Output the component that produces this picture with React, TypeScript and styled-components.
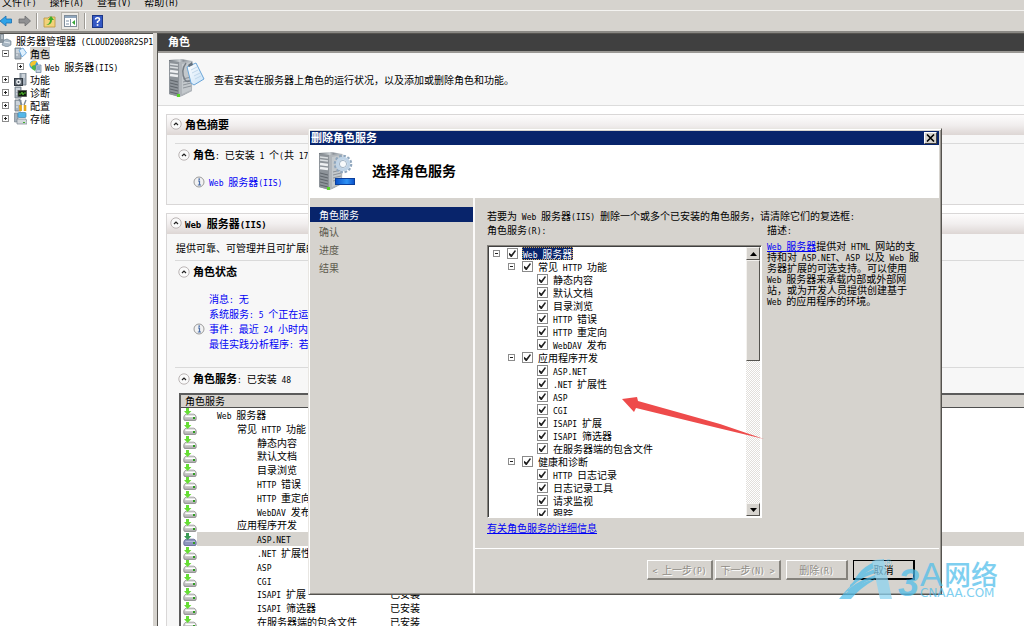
import React from 'react';
import styled, { createGlobalStyle, css } from 'styled-components';

const Global = createGlobalStyle`
  *, *::before, *::after { box-sizing: border-box; }
  html, body, #root { height: 100%; }
  body {
    margin: 0;
    overflow: hidden;
    background: #d6d3ce;
    color: #000;
    font: 10px/13px 'Noto Sans CJK SC', sans-serif;
  }
`;

const MixedText = styled.span`
  white-space: pre;
`;

const Latin = styled.span<{ $size: number }>`
  font-family: 'DejaVu Sans Mono', monospace;
  font-size: ${(p) => p.$size}px;
  line-height: 0;
`;

function T({ children, latin = 8 }: { children: string; latin?: number }) {
  const parts = children.split(/([\x20-\x7e]+)/).filter(Boolean);
  return (
    <MixedText>
      {parts.map((part, i) =>
        /^[\x20-\x7e]/.test(part) ? (
          <Latin key={i} $size={latin}>{part}</Latin>
        ) : (
          part
        ),
      )}
    </MixedText>
  );
}

/* ---------- drawings ---------- */

const Icon = styled.svg`
  display: block;
  flex: none;
`;

function Gradients() {
  return (
    <Icon width="0" height="0" aria-hidden="true">
      <defs>
        <linearGradient id="steel" x1="0" x2="1">
          <stop offset="0" stopColor="#6d747b" />
          <stop offset="0.45" stopColor="#c9ced2" />
          <stop offset="0.6" stopColor="#8b9198" />
          <stop offset="1" stopColor="#d4d8dc" />
        </linearGradient>
        <linearGradient id="blueBar" x1="0" x2="1">
          <stop offset="0" stopColor="#0a4fc8" />
          <stop offset="0.6" stopColor="#2f93f5" />
          <stop offset="1" stopColor="#0a4fc8" />
        </linearGradient>
        <linearGradient id="sheet" x1="0" y1="0" x2="1" y2="1">
          <stop offset="0" stopColor="#ffffff" />
          <stop offset="1" stopColor="#c9e2f7" />
        </linearGradient>
        <linearGradient id="disk" x1="0" y1="0" x2="0" y2="1">
          <stop offset="0" stopColor="#f2f2f2" />
          <stop offset="1" stopColor="#a8a8a8" />
        </linearGradient>
      </defs>
    </Icon>
  );
}

function Tower() {
  return (
    <g>
      <path d="M1 1 L13 0 L25 2 L24 32 L12 38 L1 35 Z" fill="url(#steel)" />
      <path d="M1 2 L11 3 L11 38 L1 35 Z" fill="#8d9399" />
      <path d="M11 3 L24 2 L24 32 L11 38 Z" fill="#b0b5ba" />
      <path d="M14 5 L23 3 L23 31 L14 35 Z" fill="#c3c8cc" />
      <path d="M2 5 L10 6 M2 8 L10 9" stroke="#d9dde0" strokeWidth="1.4" />
      <path d="M2 12 L10 13 M2 16 L10 17" stroke="#eef0f2" strokeWidth="2.6" />
      <path d="M2 21 L10 23 M2 24 L10 26 M2 27 L10 29 M2 30 L10 32 M2 33 L10 35" stroke="#5f656b" strokeWidth="1" />
      <path d="M15 20 L23 18 M15 23 L23 21 M15 26 L23 24 M15 29 L23 27" stroke="#8d9399" strokeWidth="1" />
      <rect x="9" y="35" width="3" height="3" fill="#57d328" />
    </g>
  );
}

function RoleIcon() {
  return (
    <Icon width="38" height="40" viewBox="0 0 38 40">
      <Tower />
      <path d="M18 4 Q12 12 17 21 Q19 24 24 21" fill="none" stroke="#777e86" strokeWidth="1.4" />
      <path d="M19 8 L28 4 L36 20 L26 26 L23 24 Z" fill="url(#sheet)" stroke="#6aa5d8" strokeWidth="1" />
      <path d="M23 11 L29 8 M24 14 L30 11 M26 17 L32 14 M27 20 L33 17" stroke="#b7cfe4" strokeWidth="0.8" />
      <path d="M20 6 L24 3 L25 6 L21 8 Z" fill="#64717e" />
    </Icon>
  );
}

function RemoveRoleIcon() {
  return (
    <Icon width="38" height="40" viewBox="0 0 38 40">
      <Tower />
      <circle cx="25" cy="12" r="8.2" fill="none" stroke="#8fa6bd" strokeWidth="2.2" strokeDasharray="2.6 1.7" />
      <circle cx="25" cy="12" r="5.8" fill="#eef4fa" fillOpacity="0.6" stroke="#bfd3e6" strokeWidth="3" />
      <circle cx="25" cy="12" r="3.6" fill="#f7f9fb" stroke="#8199b0" strokeWidth="0.7" />
      <rect x="17.5" y="26.5" width="19" height="6" fill="url(#blueBar)" stroke="#0b3f9c" />
    </Icon>
  );
}

type Mark = 'root' | 'roles' | 'iis' | 'features' | 'diag' | 'config' | 'storage';

function TreeIcon({ mark }: { mark: Mark }) {
  return (
    <Icon width="13" height="13" viewBox="0 0 13 13">
      {mark === 'root' && (
        <>
          <path d="M0 0 H4 V9 H0 Z" fill="#8b969f" />
          <path d="M1 2 H3 M1 4 H3" stroke="#e5eaee" />
          <path d="M4 6 L7 5 L11 7 V11 L7 13 L2 11 Z" fill="#a8b7c4" stroke="#6c7d8c" strokeWidth="0.6" />
          <path d="M4 8 L10 9" stroke="#e8eef3" />
        </>
      )}
      {mark !== 'root' && mark !== 'iis' && mark !== 'storage' && (
        <>
          <path d={mark === 'features' ? 'M6 0 H12 V12 H6 Z' : 'M1 1 H7 V12 H1 Z'} fill="#a9b4bf" stroke="#6d7984" strokeWidth="0.8" />
          <path d={mark === 'features' ? 'M8 2 H11 M8 4 H11' : 'M2 3 H6 M2 5 H6 M2 8 H4'} stroke="#eef2f5" />
        </>
      )}
      {mark === 'roles' && (
        <path d="M5 3 L9 1 L12.5 6 L8 10 Z" fill="#dff0fd" stroke="#5ba0dc" strokeWidth="0.8" />
      )}
      {mark === 'iis' && (
        <>
          <circle cx="4.8" cy="4.8" r="4.4" fill="#3b9be0" />
          <path d="M1 4 Q3 0 8 1 L6 5 L2 7 Z" fill="#f5c52f" />
          <path d="M3 6 Q6 4 8 7 L6 11 L3 9 Z" fill="#4db648" />
          <path d="M7 5 H12 V12.5 H7 Z" fill="#c5d3df" stroke="#68809a" strokeWidth="0.7" />
          <path d="M8 7 H11 M8 9 H11" stroke="#3c72b0" strokeWidth="0.8" />
        </>
      )}
      {mark === 'features' && (
        <>
          <rect x="0.5" y="5.5" width="8" height="7" fill="#626b74" stroke="#333b44" />
          <circle cx="4.5" cy="9" r="2.4" fill="#eef2f5" />
          <circle cx="4.5" cy="9" r="1" fill="#3f4a55" />
        </>
      )}
      {mark === 'diag' && (
        <>
          <rect x="4" y="4.5" width="8.5" height="6" fill="#10200f" stroke="#555" strokeWidth="0.8" />
          <path d="M5 8 L7 8 L8 6 L9 9 L10 7 L12 7" fill="none" stroke="#5ad12f" strokeWidth="0.8" />
        </>
      )}
      {mark === 'config' && (
        <>
          <path d="M6.5 12 V6 M11 12 V6" stroke="#e5a81b" strokeWidth="2.6" />
          <path d="M5 0 L8 6 M12 1 L10 6" stroke="#7c8893" strokeWidth="1.4" />
        </>
      )}
      {mark === 'storage' && (
        <>
          <path d="M0.5 1 H4 V10 H0.5 Z" fill="#a6b1bb" stroke="#6d7984" strokeWidth="0.6" />
          <rect x="4" y="0.5" width="8" height="5" rx="1" fill="#55b7e8" stroke="#3d85ad" strokeWidth="0.7" />
          <path d="M3 7 H12 L13 10 V12 H3 Z" fill="#d3d8dc" stroke="#7a858f" strokeWidth="0.7" />
          <rect x="9" y="10" width="2" height="1" fill="#3fb12b" />
        </>
      )}
    </Icon>
  );
}

function InstalledIcon({ selected }: { selected?: boolean }) {
  return (
    <Icon width="14" height="13" viewBox="0 0 14 13">
      <path
        d="M3 6.2 H11 Q13 7 13.2 9 V11 Q13.2 12.5 12 12.5 H2 Q0.8 12.5 0.8 11 V9 Q1 7 3 6.2 Z"
        fill={selected ? '#8d95bd' : 'url(#disk)'}
        stroke={selected ? '#5d658f' : '#8a8a8a'}
        strokeWidth="0.8"
      />
      <path d="M2.5 8.5 H12" stroke={selected ? '#b5bbda' : '#fff'} strokeWidth="1" />
      <rect x="10" y="9" width="2" height="2" fill="#2f9a22" />
      <path d="M3 0 H6 V3 H8.4 L4.6 7 L1 3 H3 Z" fill={selected ? '#3a9a55' : '#66dd35'} />
    </Icon>
  );
}

function Collapse() {
  return (
    <Icon width="12" height="12" viewBox="0 0 12 12">
      <circle cx="6" cy="6" r="5.2" fill="#fafafa" stroke="#b3adad" strokeWidth="0.9" />
      <path d="M4 7 L6 5 L8 7" fill="none" stroke="#222" strokeWidth="1.2" />
    </Icon>
  );
}

function Info() {
  return (
    <Icon width="12" height="12" viewBox="0 0 12 12">
      <circle cx="6" cy="6" r="5" fill="#f2f2f2" stroke="#9a9a9a" />
      <path d="M5 5 H6.5 V9 M4.8 9 H8" fill="none" stroke="#4a6ea8" strokeWidth="1.2" />
      <circle cx="6.2" cy="3.1" r="0.9" fill="#4a6ea8" />
    </Icon>
  );
}

/* ---------- window frame ---------- */

const Page = styled.div`
  display: flex;
  flex-direction: column;
  height: 100vh;
  overflow: hidden;
`;

const MenuBar = styled.nav`
  display: flex;
  align-items: center;
  gap: 13px;
  height: 10px;
  padding: 0 2px 7px;
`;

const MenuButton = styled.button`
  border: 0;
  padding: 0;
  background: none;
  font: inherit;
  color: inherit;
`;

const ToolBar = styled.div`
  display: flex;
  align-items: center;
  height: 23px;
  gap: 5px;
  border-top: 1px solid #f4f3f1;
  border-bottom: 2px solid #8b8985;
`;

const ToolButton = styled.button<{ $active?: boolean }>`
  display: grid;
  place-items: center;
  width: ${(p) => (p.$active ? 18 : 13)}px;
  height: 18px;
  padding: 0;
  border: ${(p) => (p.$active ? '1px solid #b5b2ab' : '0')};
  background: ${(p) => (p.$active ? '#ebe9e5' : 'none')};
`;

const ToolDivider = styled.span`
  width: 2px;
  height: 16px;
  border-left: 1px solid #9d9a94;
  border-right: 1px solid #fff;
`;

const Workspace = styled.div`
  display: flex;
  flex: 1;
  min-height: 0;
`;

const Sidebar = styled.aside`
  flex: none;
  width: 153px;
  overflow: hidden;
  background: #fff;
  border-top: 1px solid #55534f;
`;

const TreeRow = styled.div<{ $indent: number }>`
  display: flex;
  align-items: center;
  height: 13px;
  gap: 3px;
  padding-left: ${(p) => p.$indent}px;
`;

const TreeLabel = styled.span<{ $selected?: boolean }>`
  background: ${(p) => (p.$selected ? '#d6d3ce' : 'none')};
`;

const ExpandBox = styled.button`
  position: relative;
  flex: none;
  width: 7px;
  height: 7px;
  margin-right: 2px;
  padding: 0;
  border: 1px solid #8c8c8c;
  background: #fff;
  &::before {
    content: '';
    position: absolute;
    inset: 2px 1px;
    background: #222;
  }
`;

const PlusBox = styled(ExpandBox)`
  &::after {
    content: '';
    position: absolute;
    inset: 1px 2px;
    background: #222;
  }
`;

/* ---------- roles pane ---------- */

const Pane = styled.main`
  flex: 1;
  min-width: 0;
  display: flex;
  flex-direction: column;
  margin-left: 4px;
  background: #fff;
  border: solid #55534f;
  border-width: 1px 0 0 1px;
`;

const PaneTitle = styled.h1`
  flex: none;
  margin: 0;
  height: 19px;
  padding-left: 10px;
  background: #404040;
  border-bottom: 2px solid #9a9894;
  color: #fff;
  font-size: 11px;
  line-height: 15px;
`;

const Intro = styled.header`
  flex: none;
  display: flex;
  align-items: center;
  gap: 8px;
  height: 53px;
  padding-left: 10px;
  background: #f7f7f7;
  border-bottom: 1px solid #dcdcdc;
`;

const Cards = styled.div`
  display: flex;
  flex-direction: column;
  gap: 8px;
  padding: 8px 0 0 8px;
`;

const Card = styled.section`
  background: #f7f7f7;
  border: solid #d9d7d7;
  border-width: 1px 0 1px 1px;
`;

const CardHead = styled.h2`
  display: flex;
  align-items: center;
  gap: 3px;
  height: 20px;
  margin: 0;
  padding: 0 0 2px 3px;
  background: linear-gradient(#fdfcfc, #f1eeee 50%, #ddd6d4);
  font-size: 11px;
`;

const CardText = styled.p`
  margin: 0;
  padding: 7px 0 6px 9px;
`;

const Group = styled.section<{ $top?: number; $bottom: number }>`
  margin: ${(p) => p.$top ?? 0}px 0 0 8px;
  padding: 4px 0 ${(p) => p.$bottom}px 3px;
  border-top: 1px solid #dadada;
`;

const GroupHead = styled.h3`
  display: flex;
  align-items: center;
  gap: 3px;
  height: 13px;
  margin: 0;
  font-size: 10px;
  font-weight: 400;
  b { font-size: 11px; }
`;

const LinkList = styled.ul`
  margin: 13px 0 0;
  padding: 0 0 0 15px;
  list-style: none;
`;

const LinkItem = styled.li`
  display: grid;
  grid-template-columns: 12px 1fr;
  align-items: center;
  column-gap: 4px;
  height: 15px;
`;

const BlueLink = styled.a`
  grid-column: 2;
  color: #0000f5;
  text-decoration: none;
`;

const ServiceTable = styled.table`
  width: 100%;
  height: 236px;
  margin: 8px 0 0 1px;
  table-layout: fixed;
  border-collapse: separate;
  border-spacing: 0;
  border: solid #5b5b5b;
  border-width: 2px 0 0 2px;
  background: #fff;
  line-height: 12px;
  th {
    height: 13px;
    padding: 0 0 0 4px;
    background: #d6d3ce;
    border-bottom: 1px solid #4e4e4e;
    font-weight: 400;
    text-align: left;
  }
  td { padding: 0; }
`;

const ServiceRow = styled.tr<{ $selected?: boolean }>`
  td:not(:first-child) {
    background: ${(p) => (p.$selected ? '#d6d3ce' : 'transparent')};
  }
`;

const NameCell = styled.td<{ $level: number }>`
  && { padding-left: ${(p) => 20 + p.$level * 20}px; }
`;

const IconCell = styled.td`
  && { padding-left: 2px; }
`;

/* ---------- wizard dialog ---------- */

const Dialog = styled.section`
  position: absolute;
  left: 308px;
  top: 128px;
  display: flex;
  flex-direction: column;
  width: 634px;
  height: 467px;
  background: #d6d3ce;
  border: 1px solid;
  border-color: #e8e6e2 #55534f #55534f #e8e6e2;
  box-shadow: inset 1px 1px #fff, inset -1px -1px #9a9791;
  padding: 2px 2px 1px 1px;
`;

const TitleBar = styled.header`
  display: flex;
  align-items: center;
  justify-content: space-between;
  height: 14px;
  padding: 0 2px 0 1px;
  background: #08246b;
  color: #fff;
  h2 { margin: 0; padding-bottom: 2px; font-size: 11px; line-height: 12px; }
`;

const CloseButton = styled.button`
  display: grid;
  place-items: center;
  width: 13px;
  height: 12px;
  padding: 0;
  background: #d6d3ce;
  border: 1px solid;
  border-color: #fff #404040 #404040 #fff;
`;

const Banner = styled.div`
  display: flex;
  align-items: center;
  gap: 16px;
  height: 53px;
  padding-left: 8px;
  background: #fff;
  h3 { margin: 0; padding-bottom: 3px; font-size: 14px; line-height: 18px; }
`;

const DialogBody = styled.div`
  display: flex;
  flex: 1;
  min-height: 0;
`;

const Steps = styled.ol`
  width: 163px;
  margin: 0;
  padding: 9px 0 0;
  list-style: none;
`;

const Step = styled.li<{ $current?: boolean }>`
  height: ${(p) => (p.$current ? 15 : 18)}px;
  margin-bottom: ${(p) => (p.$current ? 1 : 0)}px;
  padding-left: 9px;
  line-height: ${(p) => (p.$current ? 15 : 18)}px;
  color: ${(p) => (p.$current ? '#fff' : '#5c5a4d')};
  background: ${(p) => (p.$current ? '#08246b' : 'none')};
`;

const Main = styled.div`
  flex: 1;
  display: flex;
  flex-direction: column;
  border-left: 2px solid #fbfaf9;
`;

const Fields = styled.div`
  flex: 1;
  padding: 11px 8px 0 12px;
  p { margin: 0; line-height: 14px; }
`;

const Columns = styled.div`
  display: grid;
  grid-template-columns: 275px 1fr;
  column-gap: 5px;
`;

const FieldTitle = styled.div`
  height: 14px;
  line-height: 14px;
`;

const TreeFrame = styled.div`
  display: flex;
  height: 273px;
  margin-top: 8px;
  background: #fff;
  border: 1px solid;
  border-color: #85827c #fff #fff #85827c;
  box-shadow: inset 1px 1px #404040;
  padding: 1px 1px 1px 2px;
`;

const CheckTree = styled.ul`
  flex: 1;
  margin: 0;
  padding: 0;
  overflow: hidden;
  list-style: none;
`;

const CheckRow = styled.li<{ $level: number }>`
  display: flex;
  align-items: center;
  gap: 5px;
  height: 13px;
  padding-left: ${(p) => 3 + p.$level * 15}px;
  label { display: flex; align-items: center; gap: 5px; }
`;

const Leaf = styled.span`
  width: 9px;
`;

const Check = styled.input`
  appearance: none;
  position: relative;
  flex: none;
  width: 11px;
  height: 11px;
  margin: 0;
  background: #fff;
  border: 1px solid #8a8a8a;
  &:checked::before {
    content: '';
    position: absolute;
    inset: 1px;
    background: #222;
    clip-path: polygon(0 40%, 35% 65%, 85% 0, 100% 15%, 40% 100%, 25% 100%, 0 70%);
  }
`;

const CheckLabel = styled.span<{ $selected?: boolean }>`
  ${(p) =>
    p.$selected &&
    css`
      margin-left: -1px;
      padding: 0 1px;
      background: #08246b;
      color: #fff;
      outline: 1px dotted #c9a35a;
      outline-offset: -1px;
    `}
`;

const ScrollBar = styled.div`
  display: flex;
  flex-direction: column;
  width: 14px;
  background: repeating-conic-gradient(#fff 0 25%, #e2dfdb 0 50%) 0 0 / 2px 2px;
`;

const raised = css`
  background: #d6d3ce;
  border: 1px solid;
  border-color: #f4f2ef #55534f #55534f #f4f2ef;
`;

const ScrollButton = styled.button`
  ${raised}
  display: grid;
  place-items: center;
  height: 13px;
  padding: 0;
`;

const Thumb = styled.div`
  ${raised}
  height: 101px;
  margin-bottom: auto;
`;

const Description = styled.div`
  margin-top: 3px;
  line-height: 11px;
  white-space: nowrap;
`;

const HelpLink = styled.a`
  display: inline-block;
  margin-top: 3px;
  color: #0000f5;
`;

const InlineLink = styled.a`
  color: #0000f5;
`;

const Footer = styled.footer`
  display: flex;
  justify-content: flex-end;
  height: 45px;
  padding: 11px 24px 0 0;
  border-top: 1px solid #fff;
`;

const PushButton = styled.button<{ $width: number; $gap?: number; $default?: boolean }>`
  ${raised}
  width: ${(p) => p.$width}px;
  height: 20px;
  margin-left: ${(p) => p.$gap ?? 5}px;
  padding: 0;
  font: inherit;
  color: #000;
  border-width: 1px 2px 2px 1px;
  border-color: ${(p) => (p.$default ? '#000' : '#fff #85827c #85827c #fff')};
  &:disabled { color: #8f8c86; text-shadow: 1px 1px #fff; }
`;

const ArrowMark = styled.svg`
  position: absolute;
  left: 620px;
  top: 394px;
  pointer-events: none;
`;

const Watermark = styled.svg`
  position: absolute;
  left: 836px;
  top: 554px;
  opacity: 0.72;
  pointer-events: none;
`;

/* ---------- data ---------- */

const sideItems: { label: string; mark: Mark; level: number; open?: boolean; selected?: boolean }[] = [
  { label: '角色', mark: 'roles', level: 0, open: true, selected: true },
  { label: 'Web 服务器(IIS)', mark: 'iis', level: 1 },
  { label: '功能', mark: 'features', level: 0 },
  { label: '诊断', mark: 'diag', level: 0 },
  { label: '配置', mark: 'config', level: 0 },
  { label: '存储', mark: 'storage', level: 0 },
];

const services: [string, number][] = [
  ['Web 服务器', 0],
  ['常见 HTTP 功能', 1],
  ['静态内容', 2],
  ['默认文档', 2],
  ['目录浏览', 2],
  ['HTTP 错误', 2],
  ['HTTP 重定向', 2],
  ['WebDAV 发布', 2],
  ['应用程序开发', 1],
  ['ASP.NET', 2],
  ['.NET 扩展性', 2],
  ['ASP', 2],
  ['CGI', 2],
  ['ISAPI 扩展', 2],
  ['ISAPI 筛选器', 2],
  ['在服务器端的包含文件', 2],
];

const removable: [string, number][] = [
  ...services,
  ['健康和诊断', 1],
  ['HTTP 日志记录', 2],
  ['日志记录工具', 2],
  ['请求监视', 2],
  ['跟踪', 2],
];

const description = [
  '持和对 ASP.NET、ASP 以及 Web 服',
  '务器扩展的可选支持。可以使用',
  'Web 服务器来承载内部或外部网',
  '站，或为开发人员提供创建基于',
  'Web 的应用程序的环境。',
];

export default function App() {
  return (
    <Page>
      <Global />
      <Gradients />
      <MenuBar>
        {['文件(F)', '操作(A)', '查看(V)', '帮助(H)'].map((m) => (
          <MenuButton key={m}><T>{m}</T></MenuButton>
        ))}
      </MenuBar>
      <ToolBar>
        <ToolButton aria-label="后退">
          <Icon width="13" height="12" viewBox="0 0 13 12">
            <path d="M0 6 L6 1 V4 H11.5 V8 H6 V11 Z" fill="#2fa3e8" stroke="#1a6fb0" strokeWidth="0.8" />
          </Icon>
        </ToolButton>
        <ToolButton aria-label="前进">
          <Icon width="13" height="12" viewBox="0 0 13 12">
            <path d="M12.5 6 L7 1 V4 H1 V8 H7 V11 Z" fill="#8f9092" stroke="#6c6d6f" strokeWidth="0.8" />
          </Icon>
        </ToolButton>
        <ToolDivider />
        <ToolButton aria-label="向上">
          <Icon width="13" height="13" viewBox="0 0 13 13">
            <path d="M1 3 H5 L6 2 H12 V12 H1 Z" fill="#f3d27a" stroke="#b9963c" strokeWidth="0.8" />
            <path d="M3 10 Q7 9 7 5 H5 L8 1 L11 5 H9 Q9 10 3 10 Z" fill="#3fae2a" />
          </Icon>
        </ToolButton>
        <ToolButton aria-label="显示/隐藏控制台树" $active>
          <Icon width="13" height="12" viewBox="0 0 13 12">
            <rect x="0.5" y="0.5" width="12" height="11" fill="#fff" stroke="#7f8c99" />
            <path d="M1 2 H12" stroke="#90a6bd" strokeWidth="2" />
            <path d="M2 6 H5 M2 9 H5 M6.5 4 V11" stroke="#7d8fa3" />
            <path d="M11 5 V10 L8 7.5 Z" fill="#35a636" />
          </Icon>
        </ToolButton>
        <ToolDivider />
        <ToolButton aria-label="帮助">
          <Icon width="11" height="13" viewBox="0 0 11 13">
            <rect x="0.5" y="0.5" width="10" height="12" fill="#3458c4" stroke="#1d3787" />
            <path d="M3.5 4.5 Q3.5 2.8 5.5 2.8 Q7.5 2.8 7.5 4.5 Q7.5 5.6 5.5 6.6 V8" fill="none" stroke="#fff" strokeWidth="1.5" />
            <rect x="4.7" y="9.2" width="1.7" height="1.6" fill="#fff" />
          </Icon>
        </ToolButton>
      </ToolBar>

      <Workspace>
        <Sidebar>
          <TreeRow $indent={0}>
            <TreeIcon mark="root" />
            <T>服务器管理器 (CLOUD2008R2SP1</T>
          </TreeRow>
          {sideItems.map((it) => (
            <TreeRow key={it.label} $indent={it.level ? 17 : 2}>
              {it.open ? <ExpandBox aria-label="折叠" /> : <PlusBox aria-label="展开" />}
              <TreeIcon mark={it.mark} />
              <TreeLabel $selected={it.selected}><T>{it.label}</T></TreeLabel>
            </TreeRow>
          ))}
        </Sidebar>

        <Pane>
          <PaneTitle>角色</PaneTitle>
          <Intro>
            <RoleIcon />
            <T>查看安装在服务器上角色的运行状况，以及添加或删除角色和功能。</T>
          </Intro>
          <Cards>
            <Card>
              <CardHead><Collapse />角色摘要</CardHead>
              <Group $top={8} $bottom={15}>
                <GroupHead>
                  <Collapse />
                  <span><b>角色</b><T>: 已安装 1 个(共 17</T></span>
                </GroupHead>
                <LinkList>
                  <LinkItem><Info /><BlueLink href="#iis"><T>Web 服务器(IIS)</T></BlueLink></LinkItem>
                </LinkList>
              </Group>
            </Card>
            <Card>
              <CardHead><Collapse /><T latin={9}>Web 服务器(IIS)</T></CardHead>
              <CardText><T>提供可靠、可管理并且可扩展的</T></CardText>
              <Group $bottom={16}>
                <GroupHead><Collapse /><b>角色状态</b></GroupHead>
                <LinkList>
                  <LinkItem><BlueLink href="#messages"><T>消息: 无</T></BlueLink></LinkItem>
                  <LinkItem><BlueLink href="#services"><T>系统服务: 5 个正在运</T></BlueLink></LinkItem>
                  <LinkItem><Info /><BlueLink href="#events"><T>事件: 最近 24 小时内</T></BlueLink></LinkItem>
                  <LinkItem><BlueLink href="#bpa"><T>最佳实践分析程序: 若</T></BlueLink></LinkItem>
                </LinkList>
              </Group>
              <Group $bottom={0}>
                <GroupHead>
                  <Collapse />
                  <span><b>角色服务</b><T>: 已安装 48</T></span>
                </GroupHead>
                <ServiceTable>
                  <colgroup>
                    <col width="16" />
                    <col width="193" />
                    <col />
                  </colgroup>
                  <thead>
                    <tr><th colSpan={3}>角色服务</th></tr>
                  </thead>
                  <tbody>
                    {services.map(([name, level]) => {
                      const selected = name === 'ASP.NET';
                      return (
                        <ServiceRow key={name} $selected={selected}>
                          <IconCell><InstalledIcon selected={selected} /></IconCell>
                          <NameCell $level={level}><T>{name}</T></NameCell>
                          <td>已安装</td>
                        </ServiceRow>
                      );
                    })}
                  </tbody>
                </ServiceTable>
              </Group>
            </Card>
          </Cards>
        </Pane>
      </Workspace>

      <Dialog role="dialog" aria-label="删除角色服务">
        <TitleBar>
          <h2>删除角色服务</h2>
          <CloseButton aria-label="关闭">
            <Icon width="9" height="8" viewBox="0 0 9 8">
              <path d="M1 0.5 L8 7.5 M8 0.5 L1 7.5" stroke="#000" strokeWidth="1.6" />
            </Icon>
          </CloseButton>
        </TitleBar>
        <Banner>
          <RemoveRoleIcon />
          <h3>选择角色服务</h3>
        </Banner>
        <DialogBody>
          <Steps>
            <Step $current>角色服务</Step>
            <Step>确认</Step>
            <Step>进度</Step>
            <Step>结果</Step>
          </Steps>
          <Main>
            <Fields>
              <p><T>若要为 Web 服务器(IIS) 删除一个或多个已安装的角色服务，请清除它们的复选框:</T></p>
              <Columns>
                <div>
                  <FieldTitle><T>角色服务(R):</T></FieldTitle>
                  <TreeFrame>
                    <CheckTree>
                      {removable.map(([name, level]) => (
                        <CheckRow key={name} $level={level}>
                          {level < 2 ? <ExpandBox aria-label="折叠" /> : <Leaf />}
                          <label>
                            <Check type="checkbox" defaultChecked />
                            <CheckLabel $selected={level === 0}><T>{name}</T></CheckLabel>
                          </label>
                        </CheckRow>
                      ))}
                    </CheckTree>
                    <ScrollBar>
                      <ScrollButton aria-label="向上滚动">
                        <Icon width="7" height="4" viewBox="0 0 7 4"><path d="M0 4 L3.5 0 L7 4 Z" /></Icon>
                      </ScrollButton>
                      <Thumb />
                      <ScrollButton aria-label="向下滚动">
                        <Icon width="7" height="4" viewBox="0 0 7 4"><path d="M0 0 L3.5 4 L7 0 Z" /></Icon>
                      </ScrollButton>
                    </ScrollBar>
                  </TreeFrame>
                  <HelpLink href="#details">有关角色服务的详细信息</HelpLink>
                </div>
                <div>
                  <FieldTitle><T>描述:</T></FieldTitle>
                  <Description>
                    <div><InlineLink href="#web"><T>Web 服务器</T></InlineLink><T>提供对 HTML 网站的支</T></div>
                    {description.map((line) => <div key={line}><T>{line}</T></div>)}
                  </Description>
                </div>
              </Columns>
            </Fields>
            <Footer>
              <PushButton $width={66} disabled><T>{'< 上一步(P)'}</T></PushButton>
              <PushButton $width={66} $gap={2} disabled><T>{'下一步(N) >'}</T></PushButton>
              <PushButton $width={62} disabled><T>删除(R)</T></PushButton>
              <PushButton $width={62} $default>取消</PushButton>
            </Footer>
          </Main>
        </DialogBody>
      </Dialog>

      <ArrowMark width="148" height="50" viewBox="0 0 148 50" aria-hidden="true">
        <path d="M2 5 L17 3 L18 7 L100 30 L144 45 L98 34 L16 14 L14 18 Z" fill="#ee4b4b" />
      </ArrowMark>

      <Watermark width="166" height="50" viewBox="0 0 166 50" aria-hidden="true">
        <path d="M3 45 Q12 38 18 27 Q26 10 48 5 L47 11 Q26 16 3 45 Z" fill="#4dbdeb" />
        <path d="M14 31 Q28 16 47 13 L48 17 Q28 20 14 34 Z" fill="#4dbdeb" />
        <path d="M10 37 Q28 22 48 19 L48 22 Q28 26 14 38 Z" fill="#4dbdeb" />
        <path d="M7 41 Q26 27 40 25 Q24 34 15 45 H3 Z" fill="#4dbdeb" />
        <path d="M36 7 Q44 4 48 6 L56 45 H44 Z" fill="#8bd3f1" />
        <text x="49" y="12" fontFamily="Liberation Sans, sans-serif" fontSize="9" fill="#4dbdeb">®</text>
        <text x="62" y="42" fontFamily="Liberation Sans, sans-serif" fontSize="38" fontStyle="italic" fontWeight="700" fill="#4dbdeb">3</text>
        <text x="84" y="32" fontFamily="Liberation Sans, sans-serif" fontSize="34" fill="#4dbdeb">A</text>
        <text x="108" y="31" fontFamily="Noto Sans CJK SC, sans-serif" fontSize="27" fontWeight="500" fill="#4dbdeb">网络</text>
        <text x="84" y="43" fontFamily="DejaVu Sans, sans-serif" fontSize="12" fill="#4dbdeb">CNAAA.COM</text>
      </Watermark>
    </Page>
  );
}
